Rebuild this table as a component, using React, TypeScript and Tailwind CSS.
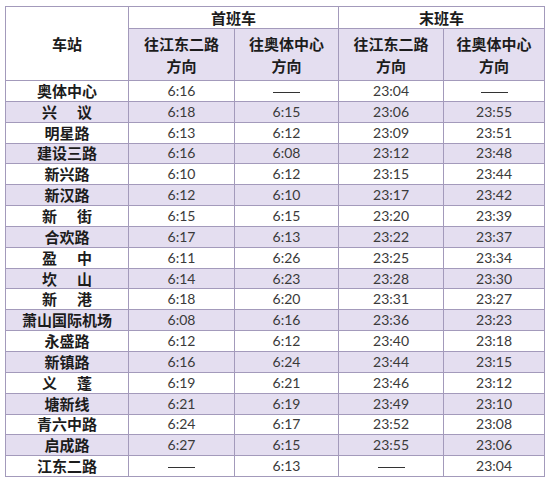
import React from "react";

type Row = [string, string, string, string, string];

const D = "——";

const rows: Row[] = [
  ["奥体中心", "6:16", D, "23:04", D],
  ["兴|议", "6:18", "6:15", "23:06", "23:55"],
  ["明星路", "6:13", "6:12", "23:09", "23:51"],
  ["建设三路", "6:16", "6:08", "23:12", "23:48"],
  ["新兴路", "6:10", "6:12", "23:15", "23:44"],
  ["新汉路", "6:12", "6:10", "23:17", "23:42"],
  ["新|街", "6:15", "6:15", "23:20", "23:39"],
  ["合欢路", "6:17", "6:13", "23:22", "23:37"],
  ["盈|中", "6:11", "6:26", "23:25", "23:34"],
  ["坎|山", "6:14", "6:23", "23:28", "23:30"],
  ["新|港", "6:18", "6:20", "23:31", "23:27"],
  ["萧山国际机场", "6:08", "6:16", "23:36", "23:23"],
  ["永盛路", "6:12", "6:12", "23:40", "23:18"],
  ["新镇路", "6:16", "6:24", "23:44", "23:15"],
  ["义|蓬", "6:19", "6:21", "23:46", "23:12"],
  ["塘新线", "6:21", "6:19", "23:49", "23:10"],
  ["青六中路", "6:24", "6:17", "23:52", "23:08"],
  ["启成路", "6:27", "6:15", "23:55", "23:06"],
  ["江东二路", D, "6:13", D, "23:04"],
];

const cjk = "font-['Noto_Sans_CJK_SC',sans-serif] font-bold text-[15px] text-[#1c1c1c]";
const num = "font-['Lato','Noto_Sans_CJK_SC',sans-serif] text-[14px] text-[#3a3a3a]";
const bd = "border border-[#a39abb]";

function Station({ name }: { name: string }) {
  if (name.includes("|")) {
    const [a, b] = name.split("|");
    return (
      <span className="inline-flex gap-[20px]">
        <span>{a}</span>
        <span>{b}</span>
      </span>
    );
  }
  return <span>{name}</span>;
}

function Cell({ v }: { v: string }) {
  if (v === D) {
    return <span className="inline-block w-[27px] h-[1px] bg-[#333] align-middle" />;
  }
  return <span>{v}</span>;
}

export default function App() {
  return (
    <div className="w-[554px] h-[485px] bg-white pl-[5px] pt-[6px]">
      <table className="border-collapse table-fixed w-[539px] leading-[18px]">
        <colgroup>
          <col className="w-[123px]" />
          <col className="w-[106px]" />
          <col className="w-[104px]" />
          <col className="w-[105px]" />
          <col className="w-[101px]" />
        </colgroup>
        <thead>
          <tr className="h-[22px]">
            <th rowSpan={2} className={`${bd} ${cjk} bg-white text-center`}>车站</th>
            <th colSpan={2} className={`${bd} ${cjk} bg-white text-center`}>首班车</th>
            <th colSpan={2} className={`${bd} ${cjk} bg-white text-center`}>末班车</th>
          </tr>
          <tr className="h-[52px]">
            {[0, 1, 2, 3].map((i) => (
              <th key={i} className={`${bd} ${cjk} bg-[#e4def0] text-center leading-[22px]`}>
                {i % 2 === 0 ? "往江东二路" : "往奥体中心"}
                <br />
                方向
              </th>
            ))}
          </tr>
        </thead>
        <tbody>
          {rows.map((r, idx) => (
            <tr key={idx} className={`h-[20.85px] ${idx % 2 === 1 ? "bg-[#e4def0]" : "bg-white"}`}>
              <td className={`${bd} ${cjk} text-center p-0`}>
                <Station name={r[0]} />
              </td>
              {[1, 2, 3, 4].map((c) => (
                <td key={c} className={`${bd} ${num} text-center p-0`}>
                  <Cell v={r[c]} />
                </td>
              ))}
            </tr>
          ))}
        </tbody>
      </table>
    </div>
  );
}
